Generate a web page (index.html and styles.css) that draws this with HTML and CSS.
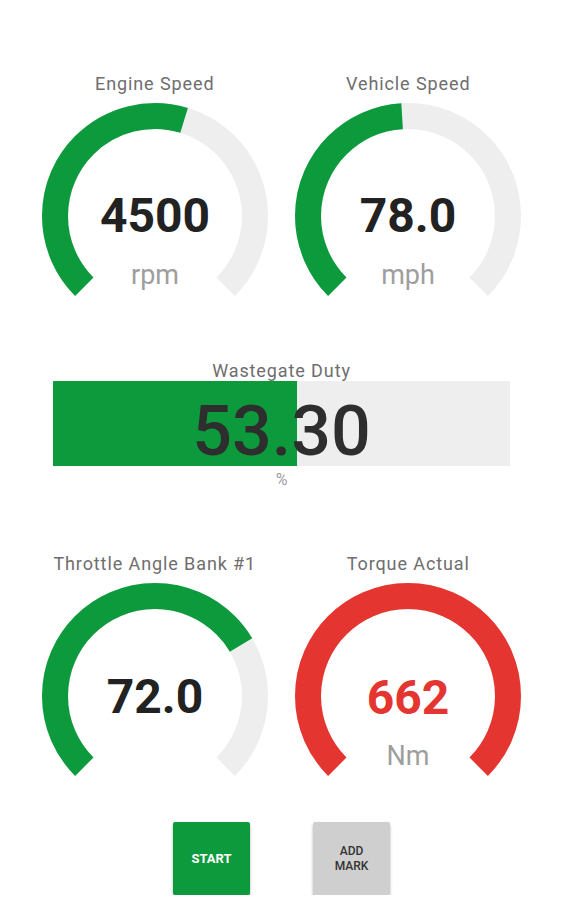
FILE: index.html
```html
<!DOCTYPE html>
<html lang="en">
<head>
    <meta charset="utf-8">
    <title>Dashboard</title>
    <link rel="stylesheet" href="styles.css">
</head>
<body>

    <main class="dash">
        <section class="gauges">
            <div class="gauge">
                <div class="title">Engine Speed</div>
                <svg class="dial" viewBox="0 0 230 200" width="230" height="200">
                    <path class="track" d="M44.29 185.71 A100 100 0 1 1 185.71 185.71"/>
                    <path class="fill" pathLength="100" stroke-dasharray="56.25 200" d="M44.29 185.71 A100 100 0 1 1 185.71 185.71"/>
                    <text class="value" x="115" y="131">4500</text>
                    <text class="unit" x="115" y="183">rpm</text>
                </svg>
            </div>
            <div class="gauge">
                <div class="title">Vehicle Speed</div>
                <svg class="dial" viewBox="0 0 230 200" width="230" height="200">
                    <path class="track" d="M44.29 185.71 A100 100 0 1 1 185.71 185.71"/>
                    <path class="fill" pathLength="100" stroke-dasharray="48.75 200" d="M44.29 185.71 A100 100 0 1 1 185.71 185.71"/>
                    <text class="value" x="115" y="131">78.0</text>
                    <text class="unit" x="115" y="183">mph</text>
                </svg>
            </div>
        </section>

        <section class="barblock">
            <div class="title">Wastegate Duty</div>
            <div class="bar">
                <div class="bar-fill" style="width: 53.3%"></div>
                <span class="bar-value">53.30</span>
            </div>
            <div class="bar-unit">%</div>
        </section>

        <section class="gauges second">
            <div class="gauge">
                <div class="title">Throttle Angle Bank #1</div>
                <svg class="dial" viewBox="0 0 230 200" width="230" height="200">
                    <path class="track" d="M44.29 185.71 A100 100 0 1 1 185.71 185.71"/>
                    <path class="fill" pathLength="100" stroke-dasharray="72 200" d="M44.29 185.71 A100 100 0 1 1 185.71 185.71"/>
                    <text class="value" x="115" y="132">72.0</text>
                    <text class="unit" x="115" y="184"></text>
                </svg>
            </div>
            <div class="gauge alarm">
                <div class="title">Torque Actual</div>
                <svg class="dial" viewBox="0 0 230 200" width="230" height="200">
                    <path class="track" d="M44.29 185.71 A100 100 0 1 1 185.71 185.71"/>
                    <path class="fill" pathLength="100" stroke-dasharray="100 200" d="M44.29 185.71 A100 100 0 1 1 185.71 185.71"/>
                    <text class="value" x="115" y="133">662</text>
                    <text class="unit" x="115" y="184">Nm</text>
                </svg>
            </div>
        </section>

        <nav class="actions">
            <button class="btn start">START</button>
            <button class="btn mark">ADD<br>MARK</button>
        </nav>
    </main>

</body>
</html>
```

FILE: styles.css
```css
body{
    margin: 0;
    background-color: #fff;
    font-family: Roboto, "Noto Sans", sans-serif;
}
.dash{
    padding: 73px 28px 0 28px;
}
.gauges{
    display: grid;
    grid-template-columns: 1fr 1fr;
}
.gauge{
    display: flex;
    flex-direction: column;
    align-items: center;
}
.title{
    font-size: 18px;
    line-height: 22px;
    letter-spacing: 0.9px;
    color: #6e6e6e;
    text-align: center;
    white-space: nowrap;
}
.dial{
    display: block;
    margin-top: 6px;
}
.dial path{
    fill: none;
    stroke-width: 26;
}
.dial .track{
    stroke: #eeeeee;
}
.dial .fill{
    stroke: #0c9a3c;
}
.dial .value{
    font-family: Roboto, sans-serif;
    font-size: 48px;
    font-weight: bold;
    fill: #222;
    text-anchor: middle;
}
.dial .unit{
    font-family: Roboto, sans-serif;
    font-size: 27px;
    fill: #9e9e9e;
    text-anchor: middle;
}
.alarm .fill{
    stroke: #e53530;
}
.alarm .value{
    fill: #e53530;
}

/* wastegate bar */
.barblock{
    margin-top: 60px;
    padding: 0 25px;
}
.barblock .title{
    line-height: 20px;
}
.bar{
    position: relative;
    height: 85px;
    box-sizing: border-box;
    padding-top: 14px;
    background-color: #eeeeee;
    display: flex;
    align-items: center;
    justify-content: center;
}
.bar-fill{
    position: absolute;
    left: 0;
    top: 0;
    bottom: 0;
    background-color: #0c9a3c;
}
.bar-value{
    position: relative;
    font-size: 70px;
    line-height: 1;
    font-weight: 500;
    color: #2e2e2e;
}
.bar-unit{
    margin-top: 4px;
    font-size: 16px;
    line-height: 20px;
    color: #9e9e9e;
    text-align: center;
}

.second{
    margin-top: 63px;
}

/* buttons */
.actions{
    margin-top: 41px;
    display: flex;
    justify-content: center;
    gap: 63px;
}
.btn{
    width: 77px;
    height: 73px;
    border: none;
    border-radius: 2px;
    font-family: Roboto, sans-serif;
    font-size: 13px;
    font-weight: 500;
    box-shadow: 0 2px 3px rgba(0,0,0,.3);
}
.start{
    background-color: #0c9a3c;
    color: #fff;
    font-weight: bold;
}
.mark{
    background-color: #cfcfcf;
    color: #333;
    font-size: 12px;
    line-height: 15px;
}
```
